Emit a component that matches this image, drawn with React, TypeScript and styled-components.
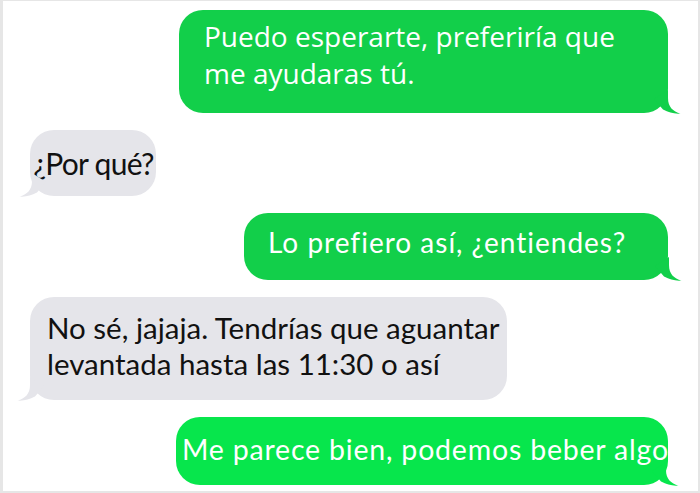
import styled, { createGlobalStyle } from "styled-components";

const GlobalStyle = createGlobalStyle`
  html, body {
    margin: 0;
    background: #ffffff;
  }
`;

const Frame = styled.div`
  width: 700px;
  height: 493px;
  box-sizing: border-box;
  border-style: solid;
  border-color: #e6e6e6;
  border-width: 1px 2px 2px 3px;
  padding-top: 9px;
  display: flex;
  flex-direction: column;
  gap: 17px;
  background: #ffffff;
  overflow: hidden;
  font-family: Lato, "Open Sans", sans-serif;
`;

const Row = styled.div<{ $out?: boolean }>`
  display: flex;
  justify-content: ${({ $out }) => ($out ? "flex-end" : "flex-start")};
  padding: ${({ $out }) => ($out ? "0 30px 0 0" : "0 0 0 27px")};
`;

interface BubbleStyle {
  $out?: boolean;
  $bg: string;
  $w: number;
  $pad: string;
  $size: number;
  $lh: number;
  $ls?: number;
  $font?: string;
}

const Bubble = styled.div<BubbleStyle>`
  position: relative;
  box-sizing: border-box;
  width: ${({ $w }) => $w}px;
  padding: ${({ $pad }) => $pad};
  border-radius: 24px;
  background: ${({ $bg }) => $bg};
  color: ${({ $out }) => ($out ? "#ffffff" : "#111111")};
  font-family: ${({ $font }) => $font ?? "inherit"};
  font-size: ${({ $size }) => $size}px;
  line-height: ${({ $lh }) => $lh}px;
  letter-spacing: ${({ $ls }) => $ls ?? 0}px;
`;

const Line = styled.span`
  display: block;
  white-space: nowrap;
`;

const TailSvg = styled.svg<{ $out?: boolean; $reach: number }>`
  position: absolute;
  bottom: -2px;
  width: 34px;
  height: 26px;
  ${({ $out, $reach }) =>
    $out
      ? `right: ${-$reach}px;`
      : `left: ${-$reach}px; transform: scaleX(-1);`}
`;

const Tail = ({ color, out, reach = 14 }: { color: string; out?: boolean; reach?: number }) => (
  <TailSvg $out={out} $reach={reach} viewBox="-20 -24 34 26">
    <path
      d="M0 -23 L0 -15 C0 -6 5 -1.5 12.5 0.6 C6 1.2 1 -0.6 -5 -3.4 L-14 -14 Z"
      fill={color}
    />
  </TailSvg>
);

const GREEN = "#12cf4a";
const GREEN_BRIGHT = "#07e64c";
const GREY = "#e5e5ea";

const App = () => {
  return (
    <>
      <GlobalStyle />
      <Frame>
        <Row $out>
          <Bubble
            $out
            $bg={GREEN}
            $w={489}
            $pad="8px 0 21px 25px"
            $size={28}
            $lh={37}
            $font='"Open Sans", Lato, sans-serif'
          >
            <Line>Puedo esperarte, preferiría que</Line>
            <Line>me ayudaras tú.</Line>
            <Tail out color={GREEN} reach={14} />
          </Bubble>
        </Row>

        <Row>
          <Bubble $bg={GREY} $w={126} $pad="0 0 0 3px" $size={30} $lh={66} $ls={-0.7}>
            <Line>¿Por qué?</Line>
            <Tail color={GREY} reach={12} />
          </Bubble>
        </Row>

        <Row $out>
          <Bubble $out $bg={GREEN} $w={424} $pad="0 0 9px 24px" $size={28} $lh={58} $ls={1}>
            <Line>Lo prefiero así, ¿entiendes?</Line>
            <Tail out color={GREEN} reach={15} />
          </Bubble>
        </Row>

        <Row>
          <Bubble $bg={GREY} $w={477} $pad="13px 0 18px 17px" $size={29.5} $lh={36}>
            <Line>No sé, jajaja. Tendrías que aguantar</Line>
            <Line>levantada hasta las 11:30 o así</Line>
            <Tail color={GREY} reach={14} />
          </Bubble>
        </Row>

        <Row $out>
          <Bubble $out $bg={GREEN_BRIGHT} $w={492} $pad="2px 0 6px 6px" $size={28.5} $lh={60} $ls={0.8}>
            <Line>Me parece bien, podemos beber algo</Line>
            <Tail out color={GREEN_BRIGHT} reach={12} />
          </Bubble>
        </Row>
      </Frame>
    </>
  );
};

export default App;
